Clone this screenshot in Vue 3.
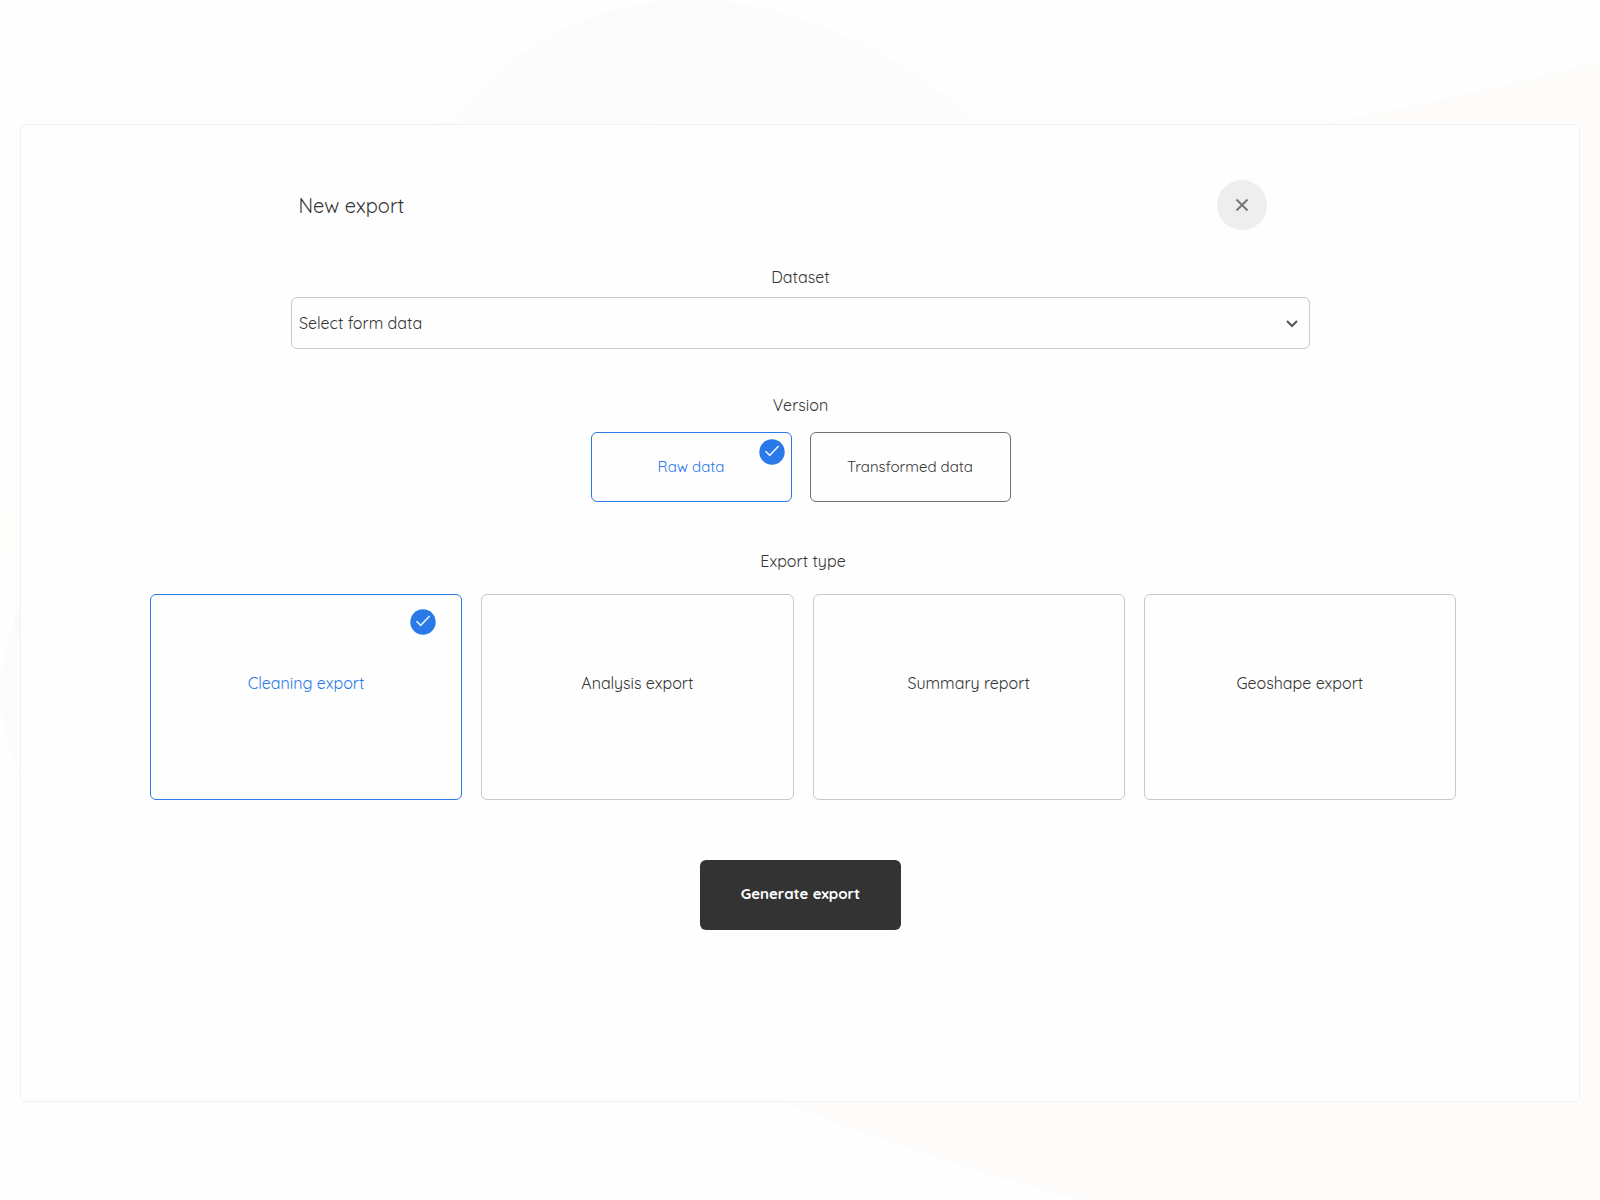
<script setup>
import { ref } from 'vue'

const dataset = ref('')
const version = ref('raw')
const exportType = ref('cleaning')

const versions = [
  { id: 'raw', label: 'Raw data' },
  { id: 'transformed', label: 'Transformed data' },
]

const exportTypes = [
  { id: 'cleaning', label: 'Cleaning export' },
  { id: 'analysis', label: 'Analysis export' },
  { id: 'summary', label: 'Summary report' },
  { id: 'geoshape', label: 'Geoshape export' },
]
</script>

<template>
  <div class="page">
    <svg class="backdrop" viewBox="0 0 1600 1200" preserveAspectRatio="none" aria-hidden="true">
      <path fill="#fefcfa" d="M1310 126C1410 107 1500 87 1600 61V1200H1080C970 1170 870 1140 780 1100Z" />
      <path fill="#fcfcfc" d="M21 604C8 635 1 660 1 690C1 720 8 750 21 782Z" />
      <path fill="#fefdfb" d="M21 426C8 455 1 485 1 530C1 575 8 610 21 642Z" />
      <path fill="#fbfafa" d="M21 604L13 622L21 642Z" />
      <path fill="#fcfcfc" d="M447 126C515 40 600 0 690 0C790 0 890 45 984 126Z" />
      <path fill="#fcfbfa" d="M400 126Q550 112 700 126Z" />
    </svg>

    <main class="panel">
      <header class="head">
        <h1 class="title">New export</h1>
        <button class="close" type="button" aria-label="Close">
          <svg width="14" height="14" viewBox="0 0 14 14" fill="none" stroke="#777" stroke-width="2">
            <path d="M1.500 1.500l11 11M12.500 1.500L1.500 12.500" />
          </svg>
        </button>
      </header>

      <section class="dataset">
        <label class="label" for="dataset">Dataset</label>
        <div class="select-wrap">
          <select id="dataset" v-model="dataset" class="select">
            <option value="">Select form data</option>
          </select>
          <svg class="chevron" width="12" height="8" viewBox="0 0 12 8" fill="none" stroke="#555" stroke-width="2">
            <path d="M1 1l5 5 5-5" />
          </svg>
        </div>
      </section>

      <section class="versions" aria-labelledby="version-label">
        <h2 id="version-label" class="label">Version</h2>
        <div class="version-row">
          <button
            v-for="item in versions"
            :key="item.id"
            type="button"
            class="version"
            :class="{ selected: version === item.id }"
            :aria-pressed="version === item.id"
            @click="version = item.id"
          >
            {{ item.label }}
            <svg v-if="version === item.id" class="tick" viewBox="0 0 26 26" fill="none">
              <circle cx="13" cy="13" r="12.700" fill="#2979e8" />
              <path d="M6.500 12.200l4.200 4.200 9-9.400" stroke="#e8f1ff" stroke-width="1.600" />
            </svg>
          </button>
        </div>
      </section>

      <section class="types" aria-labelledby="type-label">
        <h2 id="type-label" class="label">Export type</h2>
        <div class="cards">
          <button
            v-for="item in exportTypes"
            :key="item.id"
            type="button"
            class="card"
            :class="{ selected: exportType === item.id }"
            :aria-pressed="exportType === item.id"
            @click="exportType = item.id"
          >
            {{ item.label }}
            <svg v-if="exportType === item.id" class="tick" viewBox="0 0 26 26" fill="none">
              <circle cx="13" cy="13" r="12.700" fill="#2979e8" />
              <path d="M6.500 12.200l4.200 4.200 9-9.400" stroke="#e8f1ff" stroke-width="1.600" />
            </svg>
          </button>
        </div>
      </section>

      <button class="generate" type="button">Generate export</button>
    </main>
  </div>
</template>

<style>
body {
  margin: 0;
  background: #fefefe;
}
</style>

<style scoped>
.page {
  position: relative;
  box-sizing: border-box;
  min-height: 100vh;
  padding: 124px 20px 98px;
  font-family: Quicksand, Lato, sans-serif;
  font-size: 16px;
  font-weight: 400;
  line-height: 24px;
  color: #333;
}

.page * {
  box-sizing: border-box;
}

.backdrop {
  position: absolute;
  inset: 0;
  width: 100%;
  height: 100%;
}

.panel {
  position: relative;
  display: flex;
  flex-direction: column;
  align-items: center;
  padding: 55px 0 171px 1px;
  border: 1px solid #f1f1f1;
  border-radius: 6px;
  background: #fefefe;
}

button,
select {
  font: inherit;
  color: inherit;
  cursor: pointer;
}

.head {
  display: flex;
  align-items: center;
  justify-content: space-between;
  width: 1020px;
  max-width: 100%;
  padding: 0 44px 0 8px;
}

.title {
  margin: 0;
  padding-top: 2px;
  font-size: 20px;
  font-weight: 400;
  line-height: 24px;
}

.close {
  display: flex;
  align-items: center;
  justify-content: center;
  width: 50px;
  height: 50px;
  padding: 0;
  border: 0;
  border-radius: 50%;
  background: #eee;
}

.label {
  display: block;
  margin: 0;
  font-size: 16px;
  font-weight: 400;
  line-height: 24px;
  text-align: center;
}

.dataset {
  width: 1019px;
  max-width: 100%;
  margin-top: 35px;
}

.select-wrap {
  position: relative;
  margin-top: 8px;
}

.select {
  display: block;
  width: 100%;
  height: 52px;
  padding: 0 40px 0 7px;
  border: 1px solid #c8c8c8;
  border-radius: 6px;
  background: #fefefe;
  appearance: none;
}

.chevron {
  position: absolute;
  top: 23px;
  right: 12px;
  pointer-events: none;
}

.versions {
  margin-top: 44px;
}

.version-row {
  display: flex;
  gap: 18px;
  margin-top: 15px;
}

.version {
  position: relative;
  width: 201px;
  height: 70px;
  padding: 0;
  border: 1px solid #707070;
  border-radius: 6px;
  background: #fefefe;
  font-size: 15px;
}

.tick {
  position: absolute;
  top: 6px;
  right: 6px;
  width: 26px;
  height: 26px;
}

.types {
  width: 100%;
  margin-top: 47px;
  padding: 0 123px 0 128px;
}

.cards {
  display: grid;
  grid-template-columns: repeat(4, 1fr);
  gap: 19px;
  margin-top: 21px;
}

.card {
  position: relative;
  height: 206px;
  padding: 0 8px 28px;
  border: 1px solid #c8c8c8;
  border-radius: 6px;
  background: #fefefe;
}

.card .tick {
  top: 14px;
  right: 25px;
}

.version.selected,
.card.selected {
  border-color: #2979e8;
  color: #2979e8;
}

.generate {
  width: 201px;
  height: 70px;
  margin-top: 60px;
  padding: 0 0 2px;
  border: 0;
  border-radius: 6px;
  background: #333;
  color: #fff;
  font-size: 15px;
  font-weight: 700;
}
</style>
